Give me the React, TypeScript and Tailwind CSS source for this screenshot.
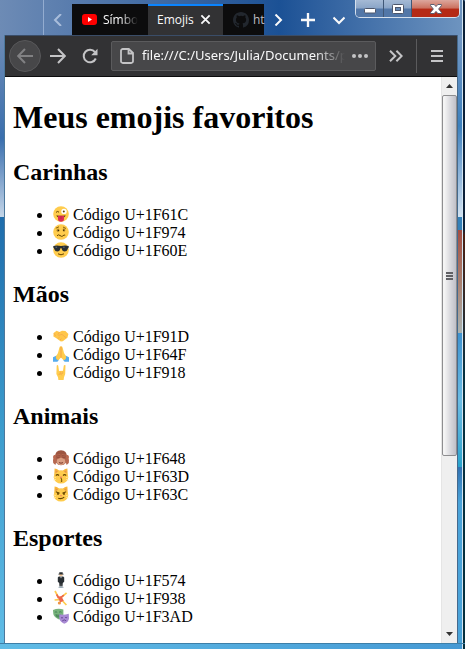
import type { ReactNode } from 'react';

type Item = { code: string; icon: ReactNode };
type Group = { title: string; items: Item[] };

function Face() {
  return <circle cx="8" cy="8" r="7.8" fill="#ffcc4d" />;
}

function Cat() {
  return (
    <>
      <path d="M1.2 8 1.6.6 Q4 .8 6 2.6 h4 Q12 .8 14.4.6 L14.8 8z" fill="#f9b83a" />
      <ellipse cx="8" cy="9.2" rx="7.2" ry="6.4" fill="#ffcc4d" />
      <path d="M2.7 2.2 5 3.7 2.8 5zM13.3 2.2 11 3.7 13.2 5z" fill="#e8934a" />
      <path d="M0 8.8 3 9.6M0 12 3 11.4M16 8.8 13 9.6M16 12 13 11.4" stroke="#fff0bd" strokeWidth=".6" />
    </>
  );
}

const groups: Group[] = [
  {
    title: 'Carinhas',
    items: [
      {
        code: 'U+1F61C',
        icon: (
          <>
            <Face />
            <path d="M3 6.4Q4.6 4.6 6 6.2" stroke="#664500" strokeWidth="1" fill="none" />
            <circle cx="11" cy="5.4" r="2.7" fill="#fff" />
            <circle cx="10.8" cy="5.6" r="1" fill="#664500" />
            <path d="M3.4 9.2Q8 10.2 12.6 9.2 12 12 8 12 4 12 3.4 9.2z" fill="#664500" />
            <path d="M5 9.8h6v3.3q0 2.6-3 2.6t-3-2.6z" fill="#dd2e54" />
            <path d="M8 10v3" stroke="#b01f40" strokeWidth=".7" />
          </>
        ),
      },
      {
        code: 'U+1F974',
        icon: (
          <>
            <Face />
            <path d="M2.8 4.2 6 2.8M10 3l3 1.5" stroke="#664500" strokeWidth=".8" />
            <ellipse cx="5" cy="6.3" rx="1.4" ry="1.7" fill="#b58a2c" />
            <ellipse cx="11" cy="6" rx="1.3" ry="1.7" fill="#b58a2c" />
            <circle cx="5.4" cy="6.4" r=".7" fill="#3c2800" />
            <circle cx="10.7" cy="6.2" r=".7" fill="#3c2800" />
            <path d="M4 11.8Q5.2 10 7 11.5T9.8 12Q11 10.4 12.2 11.2" stroke="#664500" strokeWidth="1" fill="none" />
          </>
        ),
      },
      {
        code: 'U+1F60E',
        icon: (
          <>
            <Face />
            <path d="M.3 4Q4 3 8 4.1 12 3 15.7 4V5.6Q15 6 14.5 7.5 14 9.6 11.6 9.6 9.2 9.4 8.6 6.2H7.4Q6.8 9.4 4.4 9.6 2 9.6 1.5 7.5 1 6 .3 5.6z" fill="#292f33" />
            <path d="M2.5 5.2h1.6M10.2 5.2h1.4" stroke="#8899a6" strokeWidth=".7" />
            <path d="M5 11.8Q8 13.8 11 11.8" stroke="#664500" strokeWidth="1" fill="none" />
          </>
        ),
      },
    ],
  },
  {
    title: 'Mãos',
    items: [
      {
        code: 'U+1F91D',
        icon: (
          <>
            <path d="M.6 5 3.6 2.8 6.5 4 9 2.8 12.4 3 15.4 6 14.4 9.8 9.8 13.2 7.8 13.4 3 10 .4 8.6z" fill="#ffc64a" />
            <path d="M6.6 4 4.8 6.5Q5.4 8 7.4 6.8L9 6.4 13 9.8M5 10.6l1.6-1.5M7 12l1.4-1.4M1 5.2 2.6 8" stroke="#f2a54a" strokeWidth=".7" fill="none" />
          </>
        ),
      },
      {
        code: 'U+1F64F',
        icon: (
          <>
            <path d="M0 11.2 3.6 9.6 6 13.8 4.4 15.8H0zM16 11.2l-3.6-1.6-2.4 4.2 1.6 2H16z" fill="#55acee" />
            <path d="M7.7.2Q6.6.3 6.2 2.2L5 7 2.8 10.8Q3 14 5.4 14.2L8 11.4l2.6 2.8Q13 14 13.2 10.8L11 7 9.8 2.2Q9.4.3 8.3.2z" fill="#ffcc4d" />
            <path d="M8 .8v11" stroke="#ef9645" strokeWidth=".8" />
          </>
        ),
      },
      {
        code: 'U+1F918',
        icon: (
          <>
            <path d="M3.7 1.4q1.3-.8 1.6.6L6 7l4-.2.8-5.2q.6-1.2 1.7-.4L12.2 10 11 13.2 10.6 16H5.4L5 13.2 3.4 10z" fill="#ffcc4d" />
            <path d="M6.4 9.3h1.4V7.4M8.2 9.4h1.6V7.4M5.4 10.4q2.6-.8 3.8.8" stroke="#f0a048" strokeWidth=".6" fill="none" />
          </>
        ),
      },
    ],
  },
  {
    title: 'Animais',
    items: [
      {
        code: 'U+1F648',
        icon: (
          <>
            <circle cx="1.9" cy="7" r="1.9" fill="#c1694f" />
            <circle cx="14.1" cy="7" r="1.9" fill="#c1694f" />
            <path d="M8 .3q6 0 6 7.2 0 7.8-6 7.8T2 7.5Q2 .3 8 .3z" fill="#9d5540" />
            <ellipse cx="8" cy="11.2" rx="4.5" ry="3.7" fill="#d99e82" />
            <path d="M1.4 5 7.3 4 7.7 7.8 4 9.6 2.4 15 .2 13 0 10zM14.6 5 8.7 4 8.3 7.8 12 9.6l1.6 5.4 2.2-2 .2-3z" fill="#b7684f" />
            <path d="M3 6.2 7 5.6M3.2 8 7 7M13 6.2 9 5.6M12.8 8 9 7" stroke="#7b3d30" strokeWidth=".6" />
            <path d="M6 12.6q2 1.2 4 0" stroke="#662113" strokeWidth=".8" fill="none" />
          </>
        ),
      },
      {
        code: 'U+1F63D',
        icon: (
          <>
            <Cat />
            <path d="M2.8 7.5Q4.4 5.8 6 7.5M10 7.5q1.6-1.7 3.2 0" stroke="#664500" strokeWidth="1.1" fill="none" />
            <path d="M6.6 8.8h2.8L8 10z" fill="#e75a70" />
            <path d="M7.6 10.4q2.6.4.5 1.7 2.4.8-.3 1.8" stroke="#664500" strokeWidth=".9" fill="none" />
          </>
        ),
      },
      {
        code: 'U+1F63C',
        icon: (
          <>
            <Cat />
            <path d="M2.8 5.8 6.6 7.2M13.2 5.8 9.4 7.2" stroke="#664500" strokeWidth="1.1" />
            <ellipse cx="5" cy="7.8" rx=".9" ry="1.3" fill="#664500" />
            <ellipse cx="11" cy="7.8" rx=".9" ry="1.3" fill="#664500" />
            <path d="M6.8 9.4h2.4L8 10.5z" fill="#e75a70" />
            <path d="M5.2 12.3q3.6 1 6-1.1" stroke="#664500" strokeWidth="1.1" fill="none" />
          </>
        ),
      },
    ],
  },
  {
    title: 'Esportes',
    items: [
      {
        code: 'U+1F574',
        icon: (
          <>
            <circle cx="8" cy="2.8" r="1.8" fill="#f7c99b" />
            <path d="M5.4 1.8h5.2v.8H5.4zM6.3.2h3.4V2H6.3z" fill="#292f33" />
            <path d="M5.8 4.4h4.4l1 1.2v4.2L9.8 11l-.3 3.4H8.2L8 11l-.2 3.4H6.5L6.2 11 4.8 9.8V5.6z" fill="#292f33" />
            <path d="m7.2 4.4.8 2.2.8-2.2z" fill="#e1e8ed" />
            <ellipse cx="8" cy="15.3" rx="2.8" ry=".7" fill="#99aab5" />
          </>
        ),
      },
      {
        code: 'U+1F938',
        icon: (
          <>
            <path d="M5.6 7.6 2 1M8.6 7.2l5-4.4M6 9.6 1.6 10M9.6 11l3.8 4" stroke="#ffcc4d" strokeWidth="1.7" fill="none" />
            <path d="m4.4 6.6 4-.4 2.4 4.6-3.6 1.8z" fill="#ed674b" />
            <path d="M5.6 8 3.6 4.4M8 7.4l2.8-2.2" stroke="#ed674b" strokeWidth="1.7" />
            <circle cx="6.4" cy="13" r="1.6" fill="#ef9645" />
          </>
        ),
      },
      {
        code: 'U+1F3AD',
        icon: (
          <>
            <path d="M0 2Q5 0 10.4 1.5V7Q9.6 10.4 6 11.4 1 9.4.3 6z" fill="#77b37b" />
            <path d="M1.8 4.2q1.4-1 2.4.2M6 4.2q1.4-1 2.6 0M2.8 6.7q2.4 1 4.6 0Q6.6 9.4 5 9.2 3.3 9 2.8 6.7z" stroke="#3c7650" strokeWidth=".7" fill="#5c9966" />
            <path d="M6.2 6.2Q10.5 7.3 15.8 5.7l.2 5q-1 4-4.8 5Q7.5 14.4 6.4 10.8z" fill="#a98ad4" />
            <path d="M8 9.6q1 .8 2 0M12.2 9.4q1 .8 2-.2M9.2 13q2-2.2 4-.2" stroke="#60438f" strokeWidth=".9" fill="none" />
          </>
        ),
      },
    ],
  },
];

function Chevron({ d, className }: { d: string; className: string }) {
  return (
    <svg viewBox="0 0 12 12" className={className} fill="none" stroke="currentColor" strokeWidth="2">
      <path d={d} />
    </svg>
  );
}

function WindowButtons() {
  const shine = 'bg-linear-to-b from-[#a5bad5] from-0% via-[#8ca6c8] via-45% to-[#5277a8] to-55%';
  return (
    <div className="flex h-[18px] w-[105px] overflow-hidden rounded-b-[5px] border border-t-0 border-[#d5e0ed]">
      <button aria-label="Minimizar" className={`flex w-7 items-center justify-center border-r border-[#405776] ${shine}`}>
        <svg viewBox="0 0 12 6" className="mt-1 h-[6px] w-3"><rect x=".5" y=".5" width="11" height="4.5" rx="1" fill="#fff" stroke="#4d566b" /></svg>
      </button>
      <button aria-label="Maximizar" className={`flex w-7 items-center justify-center border-r border-[#405776] ${shine}`}>
        <svg viewBox="0 0 12 10" className="h-[10px] w-3">
          <rect x=".5" y=".5" width="11" height="9" rx="1" fill="#fff" stroke="#4d566b" />
          <rect x="3.5" y="3.5" width="5" height="3" fill="#6689b5" stroke="#4d566b" />
        </svg>
      </button>
      <button aria-label="Fechar" className="flex flex-1 items-center justify-center bg-linear-to-b from-[#dca79d] from-0% via-[#cc7463] via-45% to-[#b52a16] to-55%">
        <svg viewBox="0 0 12 10" className="h-[10px] w-3">
          <path d="M.6.5h3.6L6 2.6 7.8.5h3.6v1.2L8.6 5l2.8 3.3v1.2H7.8L6 7.4 4.2 9.5H.6V8.3L3.4 5 .6 1.7z" fill="#fff" stroke="#4d566b" strokeWidth=".9" />
        </svg>
      </button>
    </div>
  );
}

function TabBar() {
  return (
    <div className="flex h-[35px] shrink-0 bg-linear-to-r from-[#6d8bb5] from-0% via-[#1b5195] via-60% to-[#6f95c0] to-100% text-[12px] text-[#f9f9fa]">
      <div className="w-11 shrink-0 border-r border-[#93acd0]" />
      <button aria-label="Abas anteriores" className="flex w-7 shrink-0 items-center justify-center pt-1 text-[#a9bddb]">
        <Chevron d="M9 0 3 6 9 12" className="h-3 w-3" />
      </button>
      <div role="tablist" className="mt-1 flex w-48 shrink-0 bg-[#0c0c0d]">
        <button role="tab" className="flex w-19 shrink-0 items-center gap-1.5 pl-2.5">
          <svg viewBox="0 0 15 11" className="h-[11px] w-[15px] shrink-0">
            <rect width="15" height="11" rx="3" fill="#f00" />
            <path d="m6 3 4 2.5L6 8z" fill="#fff" />
          </svg>
          <span className="mask-r-from-50% whitespace-nowrap">Símbo</span>
        </button>
        <div className="flex w-[75px] shrink-0 items-center justify-between border-t-2 border-[#0a84ff] bg-[#323234] pr-3 pl-[9px] pb-0.5">
          <button role="tab" aria-selected="true">Emojis</button>
          <button aria-label="Fechar aba">
            <Chevron d="M1.5 1.5 10.5 10.5M10.5 1.5 1.5 10.5" className="h-[11px] w-[11px]" />
          </button>
        </div>
        <button role="tab" className="flex min-w-0 flex-1 items-center gap-1 pl-2.5 text-[#bfbfc3]">
          <svg viewBox="0 0 16 16" className="size-4 shrink-0" fill="#22272e">
            <path d="M8 0C3.58 0 0 3.58 0 8c0 3.54 2.29 6.53 5.47 7.59.4.07.55-.17.55-.38v-1.49c-2.01.37-2.53-.49-2.69-.94-.09-.23-.48-.94-.82-1.13-.28-.15-.68-.52-.01-.53.63-.01 1.08.58 1.23.82.72 1.21 1.87.87 2.33.66.07-.52.28-.87.51-1.07-1.78-.2-3.64-.89-3.64-3.95 0-.87.31-1.59.82-2.15-.08-.2-.36-1.02.08-2.12 0 0 .67-.21 2.2.82a7.6 7.6 0 0 1 4 0c1.53-1.04 2.2-.82 2.2-.82.44 1.1.16 1.92.08 2.12.51.56.82 1.27.82 2.15 0 3.07-1.87 3.75-3.65 3.95.29.25.54.73.54 1.48v2.2c0 .21.15.46.55.38A8 8 0 0 0 16 8c0-4.42-3.58-8-8-8z" />
          </svg>
          ht
        </button>
      </div>
      <div className="flex min-w-0 flex-1 items-center pt-1">
        <button aria-label="Próximas abas" className="flex w-7 justify-center"><Chevron d="M3.5 0.5 9 6 3.5 11.5" className="h-3 w-3" /></button>
        <button aria-label="Nova aba" className="flex w-8 justify-center"><Chevron d="M6 0V12M0 6H12" className="h-[14px] w-[14px]" /></button>
        <button aria-label="Listar abas" className="flex w-8 justify-center"><Chevron d="M.5 3.5 6 9 11.5 3.5" className="h-3 w-3" /></button>
      </div>
      <WindowButtons />
      <div className="ml-0.5 w-[3px] shrink-0 rounded-tr-xs border-r-2 border-l border-r-[#0b2038] border-l-[#d4e6f3]" />
    </div>
  );
}

function Toolbar() {
  return (
    <div className="flex h-[42px] shrink-0 items-center border-t border-b border-t-[#3a4d68] border-b-[#0c0c0d] bg-[#323234] text-[#c4c4c6]">
      <button aria-label="Voltar" className="ml-1 flex size-8 shrink-0 items-center justify-center rounded-full border border-[#58585a] bg-[#474749] text-[#818183]">
        <svg viewBox="0 0 16 16" className="size-4" fill="none" stroke="currentColor" strokeWidth="2"><path d="M16 8H1.5M8 1 1.2 8 8 15" /></svg>
      </button>
      <button aria-label="Avançar" className="flex w-[34px] shrink-0 justify-center">
        <svg viewBox="0 0 16 16" className="size-4" fill="none" stroke="currentColor" strokeWidth="2"><path d="M0 8h14.5M8 1l6.8 7L8 15" /></svg>
      </button>
      <button aria-label="Recarregar" className="flex w-[30px] shrink-0 justify-center">
        <svg viewBox="0 0 16 16" className="size-4" fill="none" stroke="currentColor" strokeWidth="2">
          <path d="M13.8 10.5A6.3 6.3 0 1 1 13 4.1" />
          <path d="M15.5.8v6.4H9.2z" fill="currentColor" stroke="none" />
        </svg>
      </button>
      <div className="ml-1.5 flex h-[30px] min-w-0 flex-1 items-center rounded-xs border border-[#5b5b5d] bg-[#474749] pl-2 pr-1.5">
        <svg viewBox="0 0 14 16" className="h-4 w-[14px] shrink-0" fill="none" stroke="currentColor" strokeWidth="1.8">
          <path d="M3 1h5.8L13 5v8.2A1.8 1.8 0 0 1 11.2 15H2.8A1.8 1.8 0 0 1 1 13.2V2.8A1.8 1.8 0 0 1 2.8 1zM8.5 1v4.5H13" />
        </svg>
        <input
          aria-label="Endereço"
          defaultValue="file:///C:/Users/Julia/Documents/projetos/emojis.html"
          className="ml-2 min-w-0 flex-1 bg-transparent mask-r-from-85% font-['Noto_Sans',sans-serif] text-[13px] text-[#f9f9fa] outline-none"
        />
        <button aria-label="Ações da página" className="ml-1.5 shrink-0">
          <svg viewBox="0 0 18 4" className="h-1 w-[18px]" fill="currentColor"><circle cx="3" cy="2" r="2" /><circle cx="9" cy="2" r="2" /><circle cx="15" cy="2" r="2" /></svg>
        </button>
      </div>
      <button aria-label="Mais ferramentas" className="flex w-10 shrink-0 justify-center">
        <svg viewBox="0 0 14 12" className="h-3 w-[14px]" fill="none" stroke="currentColor" strokeWidth="2"><path d="m1 .7 5.3 5.3L1 11.3M7.4.7 12.7 6l-5.3 5.3" /></svg>
      </button>
      <div className="h-[34px] border-l border-[#5b5b5d]" />
      <button aria-label="Menu" className="flex w-10 shrink-0 justify-center">
        <svg viewBox="0 0 12 12" className="h-3 w-3" stroke="currentColor" strokeWidth="2"><path d="M0 1h12M0 6h12M0 11h12" /></svg>
      </button>
    </div>
  );
}

function ScrollBar() {
  return (
    <div className="flex w-4 shrink-0 flex-col border-l border-[#e5e5e5] bg-[#efefef]">
      <div className="flex h-[18px] shrink-0 items-center justify-center"><svg viewBox="0 0 7 4" className="h-1 w-[7px]"><path d="M0 4 3.5 0 7 4z" fill="#333" /></svg></div>
      <div className="flex basis-0 grow-17 flex-col items-center justify-center gap-px rounded-xs border border-[#8e8e90] bg-linear-to-r from-[#f5f5f5] from-10% via-[#dcdce0] via-50% to-[#c0c0c8]">
        <div className="h-0.5 w-[7px] bg-[#606064]" />
        <div className="h-0.5 w-[7px] bg-[#606064]" />
        <div className="h-0.5 w-[7px] bg-[#606064]" />
      </div>
      <div className="basis-0 grow-8" />
      <div className="flex h-[18px] shrink-0 items-center justify-center"><svg viewBox="0 0 7 4" className="h-1 w-[7px]"><path d="M0 0 3.5 4 7 0z" fill="#333" /></svg></div>
    </div>
  );
}

export default function App() {
  return (
    <div className="flex h-screen flex-col overflow-hidden bg-[#4aa0d6] font-['Open_Sans',sans-serif]">
      <TabBar />
      <div className="flex min-h-0 flex-1">
        <div className="w-[5px] shrink-0 border-r border-[#4c789c] bg-linear-to-b from-[#6d8bb5] from-0% via-[#3a6fae] via-17% to-[#c5d6e8] to-30%">
          <div className="h-[30%]" />
          <div className="h-[70%] bg-linear-to-b from-[#1f6dac] via-[#3c9ccd] to-[#60bce6]" />
        </div>
        <div className="flex min-w-0 flex-1 flex-col">
          <Toolbar />
          <div className="flex min-h-0 flex-1 bg-white">
            <main className="min-w-0 flex-1 overflow-hidden px-2 font-['Liberation_Serif',serif] text-[16px] leading-[18px] text-black">
              <h1 className="mt-[22px] mb-[23px] text-[32px] leading-9 font-bold">Meus emojis favoritos</h1>
              {groups.map((group) => (
                <section key={group.title}>
                  <h2 className="text-[24px] leading-7 font-bold">{group.title}</h2>
                  <ul className="mt-5 mb-5 list-disc pl-10">
                    {group.items.map((item) => (
                      <li key={item.code}>
                        <svg viewBox="0 0 16 16" className="mr-1 inline-block size-4 align-text-top">{item.icon}</svg>
                        Código {item.code}
                      </li>
                    ))}
                  </ul>
                </section>
              ))}
            </main>
            <ScrollBar />
          </div>
        </div>
        <div className="flex w-[5px] shrink-0 flex-col border-l border-[#45698c]">
          <div className="h-[30%] bg-linear-to-b from-[#7398c4] via-[#3c80bd] to-[#d2e2f0]" />
          <div className="h-[2%] bg-[#3380b8]" />
          <div className="h-[17%] bg-linear-to-b from-[#a34e44] via-[#a98070] to-[#a9b2b0]" />
          <div className="h-[22%] bg-linear-to-b from-[#3e92cf] via-[#6bbce4] to-[#27a3cc]" />
          <div className="flex-1 bg-linear-to-b from-[#3272b2] to-[#4aa3d9] to-20%" />
        </div>
        <div className="w-[3px] shrink-0 border-l border-[#d4e6f3] bg-linear-to-b from-[#0b2038] from-32% via-[#4a1f12] via-33% to-[#06303f] to-55%" />
      </div>
      <div className="flex h-1.5 shrink-0 border-t border-[#3d7fa8] bg-linear-to-r from-[#60bce6] to-[#4599d4]">
        <div className="ml-auto w-[3px] border-l border-[#d4e6f3] bg-[#06303f]" />
      </div>
    </div>
  );
}
